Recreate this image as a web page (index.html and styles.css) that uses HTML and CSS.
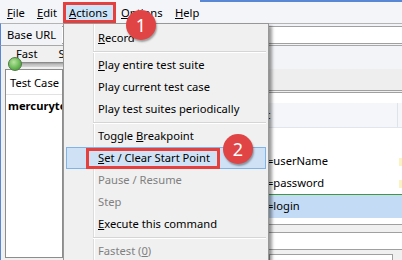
FILE: index.html
```html
<!DOCTYPE html>
<html>
<head>
<meta charset="utf-8">
<link rel="stylesheet" href="styles.css">
</head>
<body>
<div class="app">
  <div class="menubar">
    <span class="mb-item w-file"><u>F</u>ile</span>
    <span class="mb-item w-edit"><u>E</u>dit</span>
    <span class="mb-item w-actions active"><u>A</u>ctions</span>
    <span class="mb-item w-options"><u>O</u>ptions</span>
    <span class="mb-item"><u>H</u>elp</span>
  </div>
  <div class="toolbar">
    <span class="label">Base URL</span>
    <div class="url-input"></div>
  </div>
  <div class="main">
    <div class="left">
      <div class="speed">
        <div class="speed-labels"><span>Fast</span><span class="slow">Slow</span></div>
        <div class="track"><span class="thumb"></span></div>
      </div>
      <div class="suite">
        <div class="suite-head">Test Case</div>
        <div class="suite-row">mercurytours</div>
      </div>
    </div>
    <div class="right">
      <div class="tools"></div>
      <div class="tabs"></div>
      <div class="table">
        <div class="thead">
          <span class="c1">Command</span><span class="c2">Target</span><span class="c3">Value</span>
        </div>
        <div class="row"><span class="c1">open</span><span class="c2"></span><span class="c3"></span></div>
        <div class="row"><span class="c1">type</span><span class="c2">name=userName</span><span class="c3"><i class="mark"></i></span></div>
        <div class="row"><span class="c1">type</span><span class="c2">name=password</span><span class="c3"><i class="mark"></i></span></div>
        <div class="row selected"><span class="c1">click</span><span class="c2">name=login</span><span class="c3"></span></div>
        <div class="row"><span class="c1">click</span><span class="c2 faint">name=findFlights</span><span class="c3"></span></div>
      </div>
      <div class="splitter"></div>
      <div class="logbar"></div>
      <div class="logarea"><div class="logbox"></div></div>
    </div>
  </div>

  <div class="menu">
    <div class="mi"><u>R</u>ecord</div>
    <div class="sep"></div>
    <div class="mi"><u>P</u>lay entire test suite</div>
    <div class="mi">Play current test case</div>
    <div class="mi">Play test suites periodically</div>
    <div class="sep"></div>
    <div class="mi">Toggle <u>B</u>reakpoint</div>
    <div class="mi hover"><u>S</u>et / Clear Start Point<span class="callout"></span></div>
    <div class="mi disabled">Pause / Resume</div>
    <div class="mi disabled">Step</div>
    <div class="mi"><u>E</u>xecute this command</div>
    <div class="sep"></div>
    <div class="mi disabled">Fastest (<u>0</u>)</div>
  </div>

  <div class="badge b1">1</div>
  <div class="badge b2">2</div>
</div>
</body>
</html>
```
FILE: styles.css
```css
* { box-sizing: border-box; }
html, body { margin: 0; padding: 0; }
body {
  width: 402px;
  height: 260px;
  overflow: hidden;
  font-family: "Noto Sans", "Open Sans", sans-serif;
  font-size: 11.2px;
  color: #000;
}
u { text-decoration: underline; text-underline-offset: 1px; text-decoration-thickness: 1px; }

.app {
  position: relative;
  width: 402px;
  height: 260px;
  overflow: hidden;
  background: #f0f0f0;
}

/* menubar */
.menubar {
  display: flex;
  height: 23px;
  padding: 2px 0 0 2px;
  background: linear-gradient(#5a87d4, #5a87d4) no-repeat 200px 0 / 202px 2px, #f4f5f8;
}
.mb-item {
  height: 21px;
  line-height: 21px;
  padding-left: 5px;
  white-space: nowrap;
}
.w-file { width: 30px; }
.w-edit { width: 31px; }
.w-actions { width: 53px; }
.w-options { width: 54px; }
.mb-item.active {
  border: 3px solid #e5403e;
  background: #cce4f7;
  line-height: 15px;
  padding-left: 3px;
}

/* toolbar */
.toolbar {
  display: flex;
  height: 23px;
  border-top: 1px solid #b4b4b4;
  border-bottom: 1px solid #a8a8a8;
  border-left: 1px solid #5a87d4;
  background: #f2f3f6;
}
.label {
  line-height: 21px;
  padding-left: 6px;
  width: 61px;
  white-space: nowrap;
}
.url-input {
  flex: 1;
  height: 18px;
  margin-top: 2px;
  background: #fff;
  border-top: 1px solid #a0a0a0;
  border-bottom: 1px solid #a0a0a0;
}

/* main */
.main {
  display: flex;
  height: 214px;
  border-left: 1px solid #5a87d4;
}
.left { width: 62px; }
.speed { height: 23px; padding-top: 1px; }
.speed-labels {
  display: flex;
  padding-left: 15px;
  line-height: 14px;
  height: 14px;
  white-space: nowrap;
  overflow: visible;
}
.slow { margin-left: 21px; }
.track {
  position: relative;
  margin: 1px 0 0 7px;
  height: 5px;
  background: linear-gradient(#7c7c7c, #b9b9b9 40%, #d8d8d8);
  border-radius: 2px 0 0 2px;
}
.thumb {
  position: absolute;
  left: 0;
  top: -5px;
  width: 14px;
  height: 14px;
  border-radius: 50%;
  border: 1px solid #4f7a45;
  background: radial-gradient(circle at 40% 35%, #b8e3a0, #6ab955 55%, #3d8c2e);
}
.suite {
  margin-left: 4px;
  height: 189px;
  border: 1px solid #8d8d8d;
  background: #fff;
  overflow: hidden;
  white-space: nowrap;
}
.suite-head {
  height: 25px;
  padding: 2px 0 0 4px;
  line-height: 22px;
  border-bottom: 1px solid #e2e2e2;
}
.suite-row {
  padding-left: 2px;
  line-height: 22px;
  font-weight: bold;
}

.right { flex: 1; display: flex; flex-direction: column; }
.tools { height: 23px; background: #f3f4f7; }
.tabs { height: 22px; background: #eeeeee; border-bottom: 1px solid #a0a0a0; }
.table {
  margin-top: 1px;
  height: 133px;
  border-top: 1px solid #a0a0a0;
  border-bottom: 1px solid #a0a0a0;
  background: #fff;
  padding-top: 10px;
  overflow: hidden;
}
.thead, .row {
  display: grid;
  grid-template-columns: 170px 164px 1fr;
  white-space: nowrap;
}
.thead {
  height: 25px;
  line-height: 24px;
  background: #f4f6f9;
  border-bottom: 1px solid #e1e6ee;
}
.thead .c3 { border-left: 1px solid #dfe4ec; padding-left: 8px; }
.row { height: 22px; line-height: 22px; }
.c1 { padding-left: 6px; overflow: hidden; }
.c2 { padding-left: 4px; overflow: hidden; }
.c3 { overflow: hidden; padding-left: 2px; }
.mark {
  display: inline-block;
  width: 3px;
  height: 8px;
  background: #fbf3c4;
  vertical-align: middle;
}
.row.selected {
  height: 24px;
  border-top: 1px solid #3f9a3f;
  background: #c4dbf6;
}
.faint { color: #555; }
.splitter { height: 8px; background: #f0f0f0; border-bottom: 1px solid #a0a0a0; }
.logbar { height: 17px; background: #fff; border-bottom: 1px solid #a0a0a0; }
.logarea { flex: 1; padding: 4px 0 0 206px; background: #f0f0f0; }
.logbox { width: 124px; height: 100%; background: #fff; border: 1px solid #a0a0a0; border-bottom: 0; }

/* dropdown menu */
.menu {
  position: absolute;
  left: 63px;
  top: 23px;
  width: 206px;
  height: 250px;
  padding: 3px 2px;
  border: 1px solid #979797;
  background:
    linear-gradient(to right, transparent 29px, #dcdcdc 29px, #dcdcdc 30px, #fff 30px, #fff 31px, transparent 31px),
    #f0f0f0;
  box-shadow: 3px 3px 3px rgba(0, 0, 0, 0.4);
}
.mi {
  position: relative;
  height: 22px;
  line-height: 20px;
  border: 1px solid transparent;
  padding-left: 31px;
  white-space: nowrap;
}
.mi.disabled { color: #808080; }
.mi.hover {
  background: #cfe2f5;
  border-color: #80b4e8;
}
.sep {
  height: 5px;
  margin-left: 27px;
  padding-top: 2px;
}
.sep::before {
  content: "";
  display: block;
  border-top: 1px solid #d5d5d5;
  border-bottom: 1px solid #fff;
}
.callout {
  position: absolute;
  left: 19px;
  top: 0;
  width: 134px;
  height: 21px;
  border: 3px solid #e5403e;
}

/* numbered badges */
.badge {
  position: absolute;
  width: 30px;
  height: 30px;
  border-radius: 50%;
  background: #e04444;
  box-shadow: 1px 2px 2px rgba(0, 0, 0, 0.35);
  color: #fff;
  font-size: 18px;
  line-height: 30px;
  text-align: center;
}
.b1 { left: 126px; top: 10px; }
.b2 { left: 223px; top: 134px; }
```
